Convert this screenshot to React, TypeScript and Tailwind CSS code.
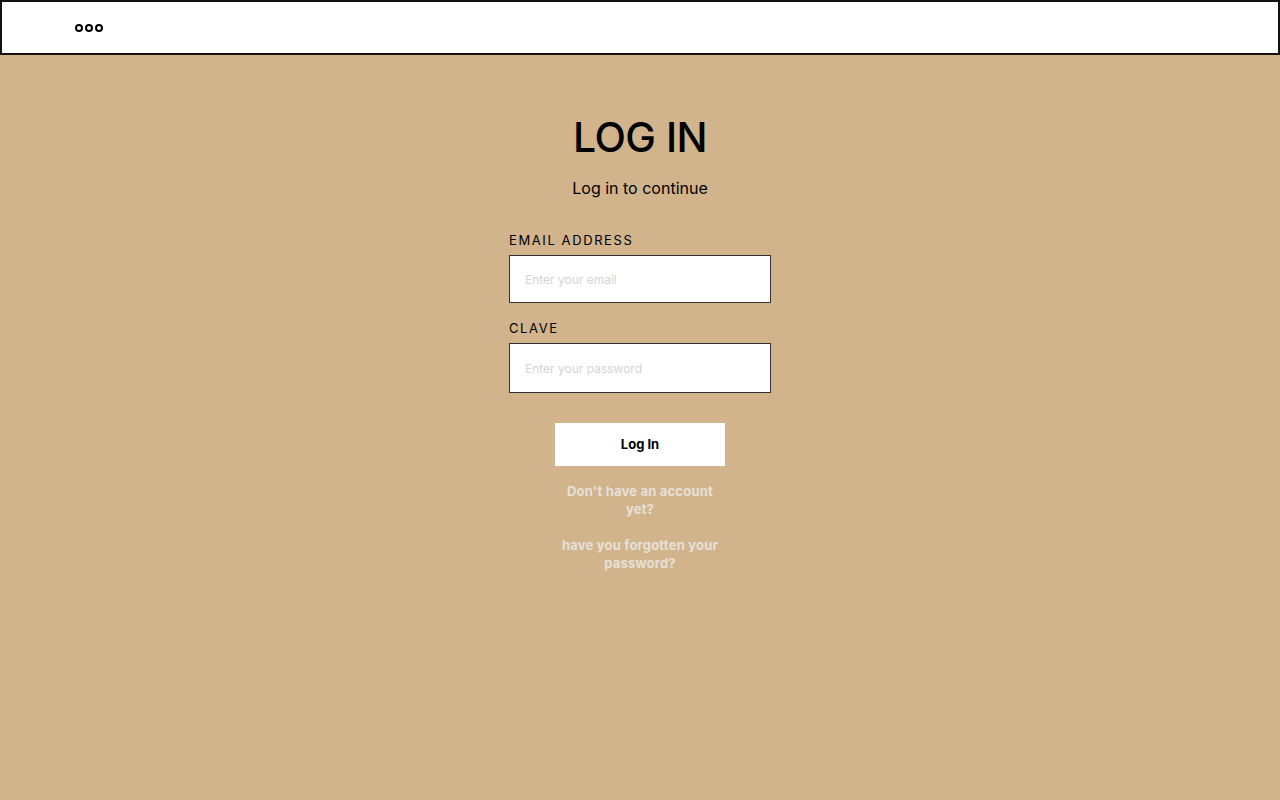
import React, { useState } from 'react';

const font = { fontFamily: 'Inter, "Noto Sans", sans-serif' };

export default function App() {
  const [email, setEmail] = useState('');
  const [password, setPassword] = useState('');

  return (
    <div className="min-h-screen bg-[#d2b48c] flex flex-col" style={font}>
      <header className="h-[55px] bg-white border-2 border-[#111] flex items-center pl-[73px]">
        <div className="flex gap-[2px]">
          <span className="w-[8px] h-[8px] rounded-full border-2 border-black" />
          <span className="w-[8px] h-[8px] rounded-full border-2 border-black" />
          <span className="w-[8px] h-[8px] rounded-full border-2 border-black" />
        </div>
      </header>

      <main className="flex flex-col items-center pt-[56px]">
        <h1 className="text-[41px] leading-[52px] font-medium text-black tracking-[-0.5px]">LOG IN</h1>
        <p className="mt-[14px] text-[16px] leading-[22px] text-black">Log in to continue</p>

        <form className="mt-[33px] w-[262px] flex flex-col" onSubmit={(e) => e.preventDefault()}>
          <label className="text-[13px] leading-[16px] tracking-[1.6px] text-black">EMAIL ADDRESS</label>
          <input
            type="email"
            value={email}
            onChange={(e) => setEmail(e.target.value)}
            placeholder="Enter your email"
            className="mt-[7px] h-[48px] w-full bg-white border border-[#333] px-[15px] text-[12px] outline-none placeholder:text-[#d4d4d4]"
          />
          <label className="mt-[17px] text-[13px] leading-[16px] tracking-[1.6px] text-black">CLAVE</label>
          <input
            type="password"
            value={password}
            onChange={(e) => setPassword(e.target.value)}
            placeholder="Enter your password"
            className="mt-[7px] h-[50px] w-full bg-white border border-[#333] px-[15px] text-[12px] outline-none placeholder:text-[#d4d4d4]"
          />
          <button
            type="submit"
            className="mt-[30px] self-center w-[170px] h-[43px] bg-white text-black text-[13px] font-bold"
          >
            Log In
          </button>
        </form>

        <div className="mt-[16px] w-[170px] flex flex-col items-center gap-[18px] text-center tracking-[0.2px]">
          <a href="#" className="text-[13px] leading-[18px] font-bold text-[#e6e0d8] px-[8px]">
            Don't have an account yet?
          </a>
          <a href="#" className="text-[13px] leading-[18px] font-bold text-[#e6e0d8]">
            have you forgotten your password?
          </a>
        </div>
      </main>
    </div>
  );
}
